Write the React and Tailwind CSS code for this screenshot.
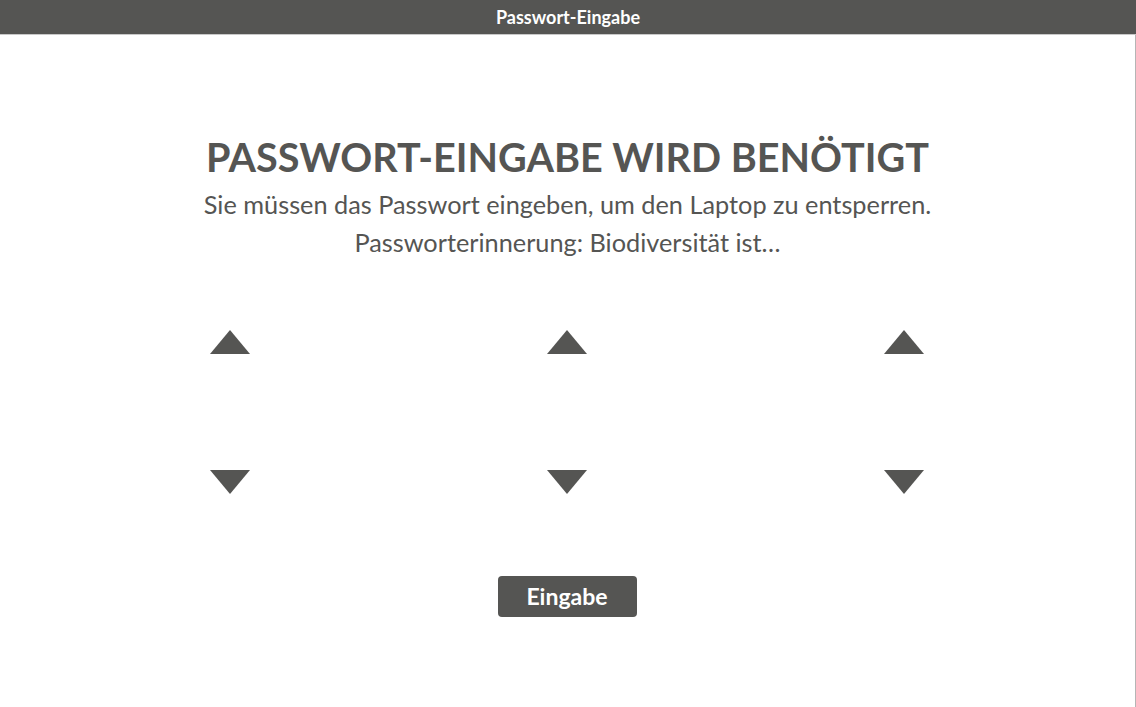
import React from "react";

function Up() {
  return (
    <svg width="40" height="24" viewBox="0 0 40 24" className="block">
      <polygon points="20,0 40,24 0,24" fill="#555553" />
    </svg>
  );
}
function Down() {
  return (
    <svg width="40" height="24" viewBox="0 0 40 24" className="block">
      <polygon points="0,0 40,0 20,24" fill="#555553" />
    </svg>
  );
}

export default function App() {
  const font = { fontFamily: "Lato, 'Noto Sans', sans-serif" };
  return (
    <div className="w-[1136px] h-[707px] bg-white flex flex-col overflow-hidden" style={font}>
      <div className="h-[35px] shrink-0 bg-[#555553] border-b border-[#c8c8c8] flex items-center justify-center">
        <span className="text-white text-[18px] font-bold">Passwort-Eingabe</span>
      </div>
      <div className="flex-1 border-r border-[#b5b5b5] flex flex-col items-center pt-[97px] text-[#555553]">
        <h1 className="text-[39.6px] font-bold leading-[50px]">PASSWORT-EINGABE WIRD BENÖTIGT</h1>
        <p className="text-[25.3px] leading-[38px] mt-[3px]">Sie müssen das Passwort eingeben, um den Laptop zu entsperren.</p>
        <p className="text-[25.3px] leading-[38px]">Passworterinnerung: Biodiversität ist…</p>
        <div className="w-[714px] flex justify-between mt-[69px] mr-[2px]">
          {[0, 1, 2].map((i) => (
            <div key={i} className="flex flex-col items-center">
              <Up />
              <div className="h-[116px]" />
              <Down />
            </div>
          ))}
        </div>
        <button className="mt-[82px] mr-[1px] w-[139px] h-[41px] rounded-[4px] bg-[#555553] text-white text-[23px] font-bold flex items-center justify-center">
          Eingabe
        </button>
      </div>
    </div>
  );
}
